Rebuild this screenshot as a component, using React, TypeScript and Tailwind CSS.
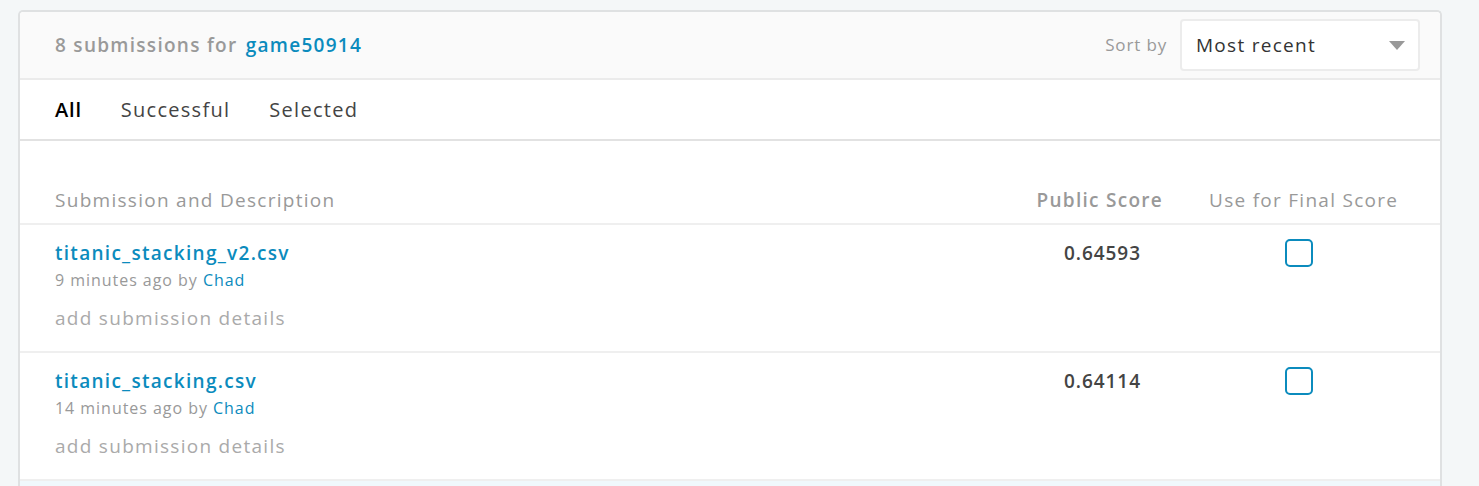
import React from "react";

const rows = [
  { file: "titanic_stacking_v2.csv", ago: "9 minutes ago", score: "0.64593" },
  { file: "titanic_stacking.csv", ago: "14 minutes ago", score: "0.64114" },
];

const Checkbox = () => (
  <span className="block w-[28px] h-[28px] rounded-[5px] border-2 border-[#0b8bbd] bg-white" />
);

export default function App() {
  return (
    <div
      className="min-h-[486px] bg-[#f4f7f8] pt-[10px] pl-[18px] overflow-hidden tracking-[0.08em]"
      style={{ fontFamily: '"Open Sans", "Liberation Sans", sans-serif' }}
    >
      <div className="w-[1424px] rounded-t-[5px] border-2 border-b-0 border-[#dfe1e2] bg-white">
        {/* header */}
        <div className="h-[68px] flex items-center justify-between bg-[#fafafa] border-b-2 border-[#ebebeb] pl-[35px] pr-[20px] rounded-t-[4px]">
          <p className="text-[19px] font-semibold text-[#999]">
            8 submissions for <span className="ml-[2px] text-[#0b8bbd]">game50914</span>
          </p>
          <div className="flex items-center">
            <span className="text-[17px] text-[#999] mr-[13px] tracking-[0.05em]">Sort by</span>
            <div className="w-[240px] h-[52px] rounded-[4px] border-2 border-[#ececec] bg-white flex items-center justify-between pl-[14px] pr-[13px]">
              <span className="text-[19px] text-[#333]">Most recent</span>
              <svg width="16" height="9" viewBox="0 0 16 9">
                <path d="M0 0h16L8 9z" fill="#999" />
              </svg>
            </div>
          </div>
        </div>

        {/* tabs */}
        <div className="h-[61px] flex items-center gap-[39px] pl-[35px] border-b-2 border-[#e2e2e2]">
          <span className="text-[20px] font-semibold text-black tracking-[0.04em]">All</span>
          <span className="text-[20px] text-[#444]">Successful</span>
          <span className="text-[20px] text-[#444]">Selected</span>
        </div>

        {/* table header */}
        <div className="h-[84px] flex items-end pb-[9px] pl-[35px] border-b-2 border-[#efefef]">
          <span className="flex-1 text-[19px] text-[#999]">Submission and Description</span>
          <span className="w-[166px] text-right text-[19px] font-semibold text-[#999]">Public Score</span>
          <span className="w-[277px] pl-[46px] text-[19px] text-[#999]">Use for Final Score</span>
        </div>

        {rows.map((r) => (
          <div key={r.file} className="h-[128px] flex pl-[35px] pt-[14px] border-b-2 border-[#efefef]">
            <div className="flex-1">
              <p className="text-[19px] leading-[28px] font-semibold text-[#0b8bbd]">{r.file}</p>
              <p className="text-[16px] leading-[26px] text-[#999] tracking-[0.06em]">
                {r.ago} by <span className="text-[#0b8bbd]">Chad</span>
              </p>
              <p className="mt-[11px] text-[19px] leading-[28px] text-[#aaa]">add submission details</p>
            </div>
            <span className="w-[166px] pr-[22px] text-right text-[19px] leading-[28px] font-semibold text-[#444] tracking-[0.05em]">
              {r.score}
            </span>
            <div className="w-[277px] pl-[122px]">
              <Checkbox />
            </div>
          </div>
        ))}
        <div className="h-[10px] bg-[#f0f8fc]" />
      </div>
    </div>
  );
}
